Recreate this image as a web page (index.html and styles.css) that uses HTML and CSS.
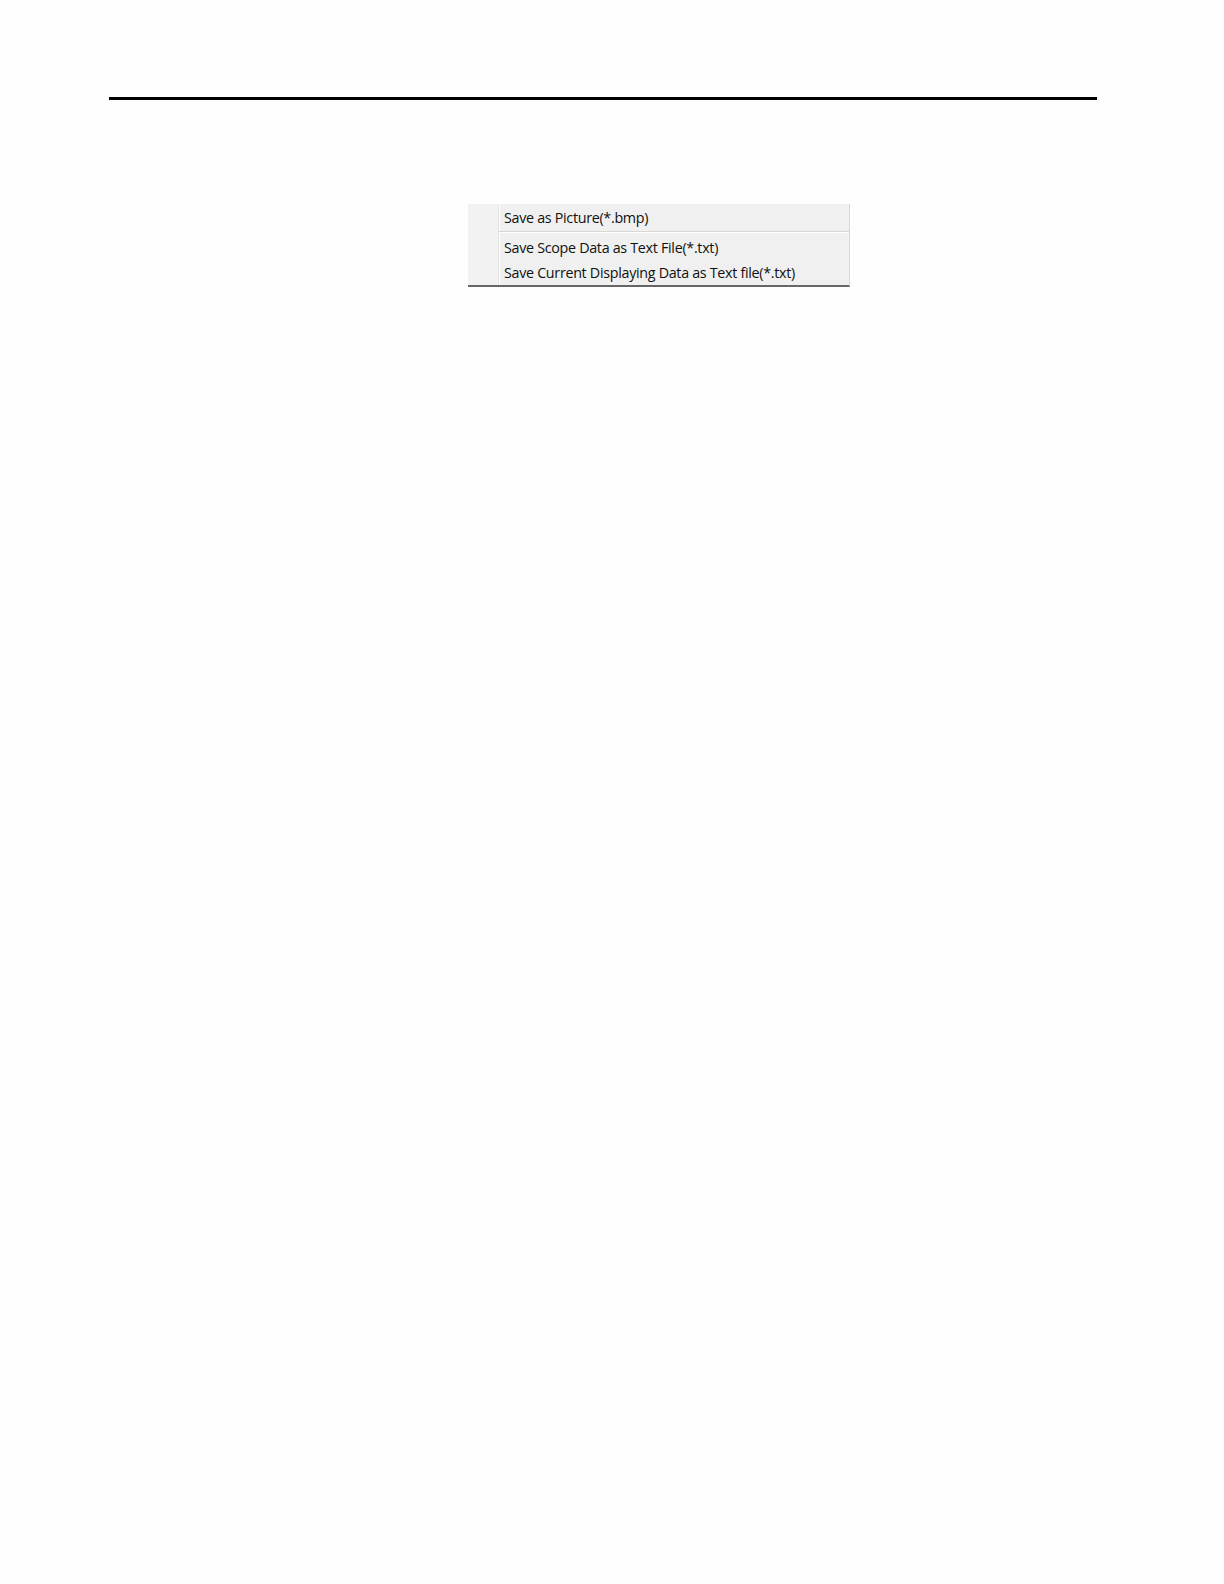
FILE: index.html
```
<!DOCTYPE html>
<html>
<head>
<meta charset="utf-8">
<link rel="stylesheet" href="styles.css">
</head>
<body>
<div class="page">
  <div class="rule"></div>
  <div class="menu-wrap">
    <div class="menu">
      <div class="gutter"></div>
      <div class="items">
        <div class="item first">Save as Picture(*.bmp)</div>
        <div class="sep"></div>
        <div class="item second">Save Scope Data as Text File(*.txt)</div>
        <div class="item last">Save Current Displaying Data as Text file(*.txt)</div>
      </div>
    </div>
  </div>
</div>
</body>
</html>
```
FILE: styles.css
```
html, body {
  margin: 0;
  padding: 0;
  background: #fefefe;
}
.page {
  width: 1224px;
  height: 1584px;
  padding-top: 97px;
  box-sizing: border-box;
}
.rule {
  margin-left: 109px;
  width: 988px;
  height: 3px;
  background: #000;
}
.menu-wrap {
  padding-top: 104px;
  padding-left: 468px;
}
.menu {
  display: flex;
  width: 381px;
  background: #f0f0f0;
  border-bottom: 2px solid #666;
  border-right: 1px solid #d8d8d8;
  font-family: "Open Sans", "Noto Sans", sans-serif;
  font-size: 14.3px;
  color: #111;
}
.gutter {
  width: 30px;
  background: #f2f2f2;
  border-right: 1px solid #e2e2e2;
  box-shadow: 1px 0 0 #fff;
}
.items {
  flex: 1;
  padding-left: 5px;
}
.item {
  letter-spacing: -0.3px;
  white-space: nowrap;
}
.item.first {
  height: 27px;
  line-height: 27px;
}
.sep {
  height: 1px;
  background: #d6d6d6;
  border-bottom: 1px solid #fff;
  margin: 0 0 2px -5px;
}
.item.second {
  height: 26px;
  line-height: 26px;
}
.item.last {
  height: 24px;
  line-height: 23px;
}
```
